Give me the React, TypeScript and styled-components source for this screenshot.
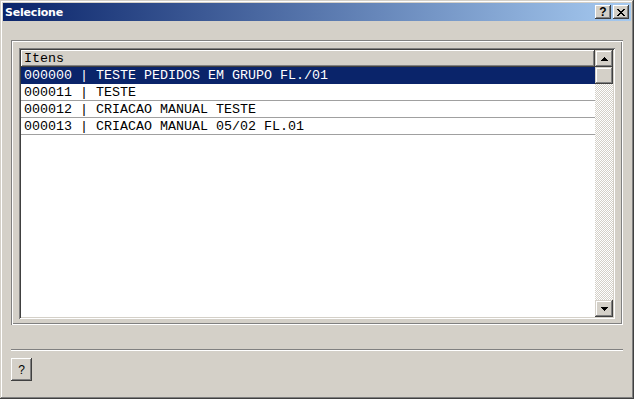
import React from "react";
import styled, { createGlobalStyle } from "styled-components";

const Global = createGlobalStyle`
  html, body { margin: 0; padding: 0; background: #d4d0c8; }
  body { width: 634px; height: 399px; overflow: hidden; }
`;

const Win = styled.div`
  box-sizing: border-box;
  width: 634px;
  height: 399px;
  padding: 3px;
  background: #d4d0c8;
  display: flex;
  flex-direction: column;
  box-shadow: inset -1px -1px #404040, inset 1px 1px #d4d0c8,
    inset -2px -2px #808080, inset 2px 2px #ffffff;
`;

const TitleBar = styled.div`
  height: 18px;
  flex: none;
  display: flex;
  align-items: center;
  padding: 0 2px 0 2px;
  background: linear-gradient(to right, #0a246a, #a6caf0);
`;

const Title = styled.span`
  flex: 1;
  color: #fff;
  font-family: "DejaVu Sans", sans-serif;
  font-weight: bold;
  font-size: 11px;
  letter-spacing: -0.2px;
`;

const CapButton = styled.div<{ $gap?: number }>`
  box-sizing: border-box;
  width: 16px;
  height: 14px;
  margin-left: ${(p) => p.$gap ?? 0}px;
  background: #d4d0c8;
  display: flex;
  align-items: center;
  justify-content: center;
  box-shadow: inset -1px -1px #404040, inset 1px 1px #ffffff,
    inset -2px -2px #808080, inset 2px 2px #d4d0c8;
  font-family: "Liberation Sans", sans-serif;
  font-weight: bold;
  font-size: 12px;
  color: #000;
  line-height: 14px;
`;

const Client = styled.div`
  flex: 1;
  display: flex;
  flex-direction: column;
  padding: 19px 8px 0 8px;
`;

const Group = styled.div`
  box-sizing: border-box;
  height: 285px;
  padding: 8px 8px 6px 8px;
  display: flex;
  box-shadow: inset 1px 1px #808080, inset -1px -1px #ffffff,
    inset 2px 2px #ffffff, inset -2px -2px #808080;
`;

const ListBox = styled.div`
  box-sizing: border-box;
  flex: 1;
  padding: 2px;
  display: flex;
  background: #fff;
  box-shadow: inset 1px 1px #808080, inset -1px -1px #ffffff,
    inset 2px 2px #404040, inset -2px -2px #d4d0c8;
`;

const ListArea = styled.div`
  flex: 1;
  display: flex;
  flex-direction: column;
  background: #fff;
`;

const Header = styled.div`
  box-sizing: border-box;
  height: 17px;
  padding: 0 3px;
  display: flex;
  align-items: center;
  background: #d4d0c8;
  box-shadow: inset -1px -1px #404040, inset 1px 1px #ffffff,
    inset -2px -2px #808080;
  font-family: "Courier New", "Liberation Mono", monospace;
  font-size: 13.33px;
  color: #000;
`;

const Row = styled.div<{ $selected?: boolean }>`
  box-sizing: border-box;
  height: 17px;
  padding: 0 3px;
  display: flex;
  align-items: center;
  white-space: pre;
  border-bottom: 1px solid ${(p) => (p.$selected ? "#0a246a" : "#a0a0a0")};
  background: ${(p) => (p.$selected ? "#0a246a" : "#ffffff")};
  color: ${(p) => (p.$selected ? "#ffffff" : "#000000")};
  font-family: "Courier New", "Liberation Mono", monospace;
  font-size: 13.33px;
`;

const ScrollBar = styled.div`
  width: 18px;
  flex: none;
  display: flex;
  flex-direction: column;
`;

const ScrollBtn = styled.div`
  box-sizing: border-box;
  width: 18px;
  height: 17px;
  flex: none;
  background: #d4d0c8;
  display: flex;
  align-items: center;
  justify-content: center;
  box-shadow: inset -1px -1px #404040, inset 1px 1px #d4d0c8,
    inset -2px -2px #808080, inset 2px 2px #ffffff;
`;

const Track = styled.div`
  flex: 1;
  background-image: conic-gradient(
    #ffffff 25%,
    #d4d0c8 0 50%,
    #ffffff 0 75%,
    #d4d0c8 0
  );
  background-size: 2px 2px;
`;

const Separator = styled.div`
  height: 2px;
  margin-top: 24px;
  box-shadow: inset 0 1px #808080, inset 0 -1px #ffffff;
`;

const Footer = styled.div`
  display: flex;
  padding-top: 7px;
`;

const HelpButton = styled.div`
  box-sizing: border-box;
  width: 21px;
  height: 23px;
  background: #d4d0c8;
  display: flex;
  align-items: center;
  justify-content: center;
  box-shadow: inset -1px -1px #404040, inset 1px 1px #ffffff,
    inset -2px -2px #808080, inset 2px 2px #d4d0c8;
  font-family: "Liberation Sans", sans-serif;
  font-size: 12px;
  color: #000;
`;

const Arrow = ({ down }: { down?: boolean }) => (
  <svg width="7" height="4" viewBox="0 0 7 4" style={{ display: "block" }}>
    <path
      d={down ? "M0 0H7L3.5 4Z" : "M3.5 0L7 4H0Z"}
      fill="#000"
      shapeRendering="crispEdges"
    />
  </svg>
);

const CloseIcon = () => (
  <svg width="8" height="7" viewBox="0 0 8 7" style={{ display: "block" }}>
    <path
      d="M0 0h2v1h-2zM6 0h2v1h-2zM1 1h2v1h-2zM5 1h2v1h-2zM2 2h4v1h-4zM3 3h2v1h-2zM2 4h4v1h-4zM1 5h2v1h-2zM5 5h2v1h-2zM0 6h2v1h-2zM6 6h2v1h-2z"
      fill="#000"
      shapeRendering="crispEdges"
    />
  </svg>
);

const items = [
  "000000 | TESTE PEDIDOS EM GRUPO FL./01",
  "000011 | TESTE",
  "000012 | CRIACAO MANUAL TESTE",
  "000013 | CRIACAO MANUAL 05/02 FL.01",
];

export default function App() {
  return (
    <>
      <Global />
      <Win>
        <TitleBar>
          <Title>Selecione</Title>
          <CapButton>?</CapButton>
          <CapButton $gap={2}>
            <CloseIcon />
          </CapButton>
        </TitleBar>
        <Client>
          <Group>
            <ListBox>
              <ListArea>
                <Header>Itens</Header>
                {items.map((t, i) => (
                  <Row key={t} $selected={i === 0}>
                    {t}
                  </Row>
                ))}
              </ListArea>
              <ScrollBar>
                <ScrollBtn>
                  <Arrow />
                </ScrollBtn>
                <ScrollBtn />
                <Track />
                <ScrollBtn>
                  <Arrow down />
                </ScrollBtn>
              </ScrollBar>
            </ListBox>
          </Group>
          <Separator />
          <Footer>
            <HelpButton>?</HelpButton>
          </Footer>
        </Client>
      </Win>
    </>
  );
}
